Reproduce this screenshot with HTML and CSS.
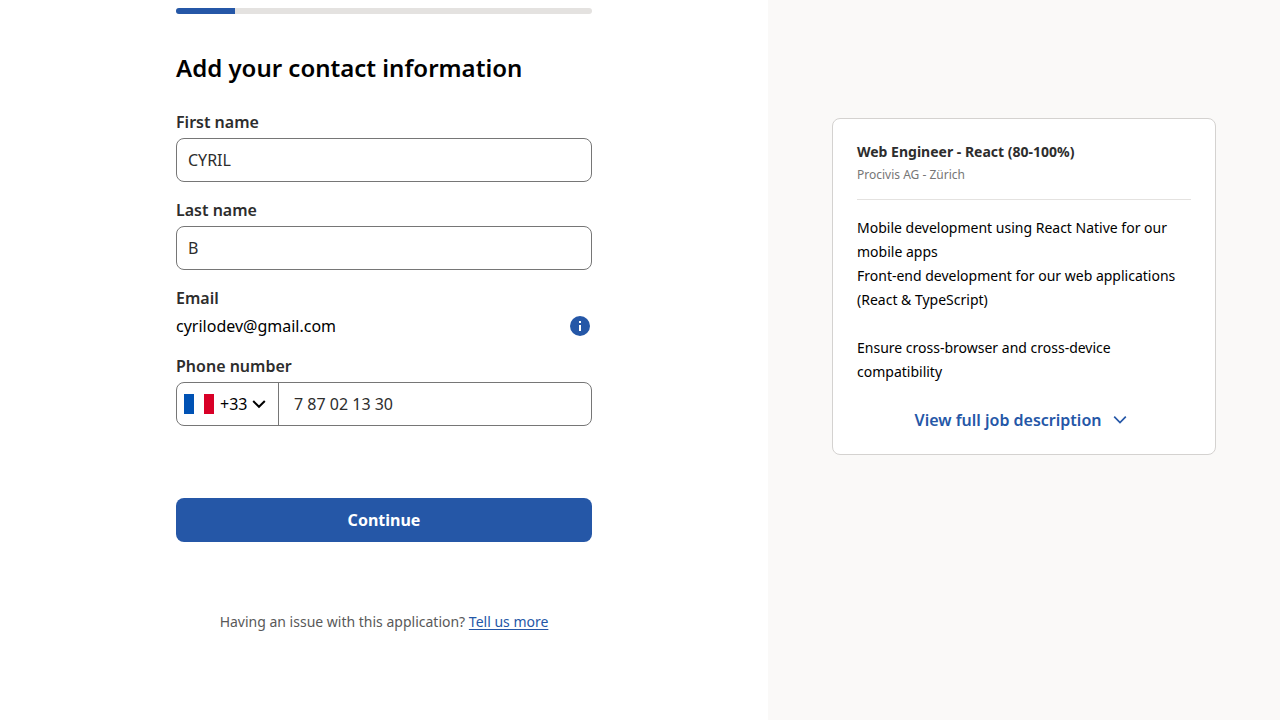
FILE: index.html
```html
<!DOCTYPE html>
<html lang="en">
<head>
<meta charset="utf-8">
<meta name="viewport" content="width=device-width, initial-scale=1">
<title>Add your contact information</title>
<link rel="stylesheet" href="styles.css">
</head>
<body>
<div class="layout">
  <main class="main">
    <div class="content">
      <div class="progress" role="progressbar" aria-label="Application progress" aria-valuenow="14" aria-valuemin="0" aria-valuemax="100"><div class="progress-bar" style="width:14.2%"></div></div>
      <h1 class="title">Add your contact information</h1>
      <form class="form">
        <div class="field">
          <label class="label" for="first-name">First name</label>
          <input class="input" id="first-name" type="text" value="CYRIL">
        </div>
        <div class="field">
          <label class="label" for="last-name">Last name</label>
          <input class="input" id="last-name" type="text" value="B">
        </div>
        <div class="field">
          <span class="label">Email</span>
          <div class="email-row">
            <span>cyrilodev@gmail.com</span>
            <button class="info" type="button" aria-label="About your email">
              <svg width="20" height="20" viewBox="0 0 20 20" aria-hidden="true"><circle cx="10" cy="10" r="10" fill="#2557a7"/><path d="M9 5h2v2H9zM9 9h2v6H9z" fill="#fff"/></svg>
            </button>
          </div>
        </div>
        <div class="field">
          <label class="label" for="phone">Phone number</label>
          <div class="phone">
            <div class="country">
              <svg class="flag" width="30" height="20" viewBox="0 0 30 20" aria-hidden="true"><path d="M0 0h10v20H0z" fill="#0052b4"/><path d="M10 0h10v20H10z" fill="#fff"/><path d="M20 0h10v20H20z" fill="#d80027"/></svg>
              <select class="country-select" aria-label="Country code"><option>+33</option></select>
              <svg class="country-arrow" width="14" height="10" viewBox="0 0 14 10" fill="none" stroke="#000" stroke-width="2" aria-hidden="true"><path d="M1.200 2l5.800 5.800L12.800 2"/></svg>
            </div>
            <input class="phone-input" id="phone" type="tel" value="7 87 02 13 30">
          </div>
        </div>
        <button class="continue" type="button">Continue</button>
      </form>
      <p class="help">Having an issue with this application? <a class="link" href="#">Tell us more</a></p>
    </div>
  </main>
  <aside class="aside">
    <section class="card">
      <header class="card-header">
        <h2 class="job-title">Web Engineer - React (80-100%)</h2>
        <p class="company">Procivis AG - Zürich</p>
      </header>
      <div class="description">
        <p>Mobile development using React Native for our mobile apps</p>
        <p class="paragraph">Front-end development for our web applications (React &amp; TypeScript)</p>
        <p>Ensure cross-browser and cross-device compatibility</p>
      </div>
      <button class="expand" type="button">View full job description
        <svg width="14" height="10" viewBox="0 0 14 10" fill="none" stroke="#2557a7" stroke-width="1.700" aria-hidden="true"><path d="M1.200 1.700l5.800 5.800 5.800-5.800"/></svg>
      </button>
    </section>
  </aside>
</div>
</body>
</html>
```
FILE: styles.css
```css
* { box-sizing: border-box; }
body {
  margin: 0;
  font-family: "Noto Sans", "Open Sans", sans-serif;
  font-size: 16px;
  line-height: 24px;
  color: #000;
  background: #fff;
}
h1, h2, p { margin: 0; }
button, input, select { font: inherit; color: inherit; }
button { border: 0; background: none; padding: 0; cursor: pointer; }

.layout { display: grid; grid-template-columns: 3fr 2fr; min-height: 100vh; }
.main { padding: 8px 16px; }
.content { max-width: 416px; margin: 0 auto; }

.progress { height: 6px; border-radius: 3px; background: #e4e2e0; overflow: hidden; }
.progress-bar { height: 100%; background: #2557a7; }
.title { margin: 38px 0 26px; font-size: 24px; line-height: 32px; font-weight: 600; }

.form { display: flex; flex-direction: column; gap: 16px; }
.field { display: flex; flex-direction: column; gap: 4px; }
.label { font-weight: 600; color: #2d2d2d; }
.input { width: 100%; height: 44px; padding: 0 11px; border: 1px solid #767676; border-radius: 8px; background: #fff; color: #2d2d2d; }
.email-row { display: flex; align-items: center; justify-content: space-between; padding-right: 2px; }
.info { display: flex; }

.phone { display: flex; height: 44px; border: 1px solid #767676; border-radius: 8px; }
.country { display: flex; align-items: center; padding: 0 12px 0 7px; border-right: 1px solid #767676; }
.country-select { appearance: none; border: 0; background: none; padding: 0; margin: 0 4px 0 6px; }
.phone-input { flex: 1; min-width: 0; padding: 0 15px; border: 0; border-radius: 0 8px 8px 0; background: none; color: #2d2d2d; }

.continue { height: 44px; margin-top: 56px; border-radius: 8px; background: #2557a7; color: #fff; font-weight: 700; }
.help { margin-top: 68px; text-align: center; font-size: 14px; color: #595959; }
.link { color: #2557a7; text-decoration: underline; text-decoration-thickness: 1px; text-underline-offset: 2px; }

.aside { padding: 118px 64px 64px; background: #faf9f8; }
.card { padding: 24px 24px 12px; border: 1px solid #d4d2d0; border-radius: 8px; background: #fff; }
.card-header { padding-bottom: 14px; border-bottom: 1px solid #e4e2e0; }
.job-title { font-size: 14px; line-height: 18px; font-weight: 700; color: #2d2d2d; }
.company { padding-top: 4px; font-size: 12px; line-height: 20px; color: #767676; }
.description { margin-top: 16px; font-size: 14px; }
.paragraph { margin-bottom: 24px; }
.expand { display: flex; align-items: center; justify-content: center; gap: 12px; width: 100%; height: 44px; margin-top: 14px; padding-right: 6px; color: #2557a7; font-weight: 600; }
```
